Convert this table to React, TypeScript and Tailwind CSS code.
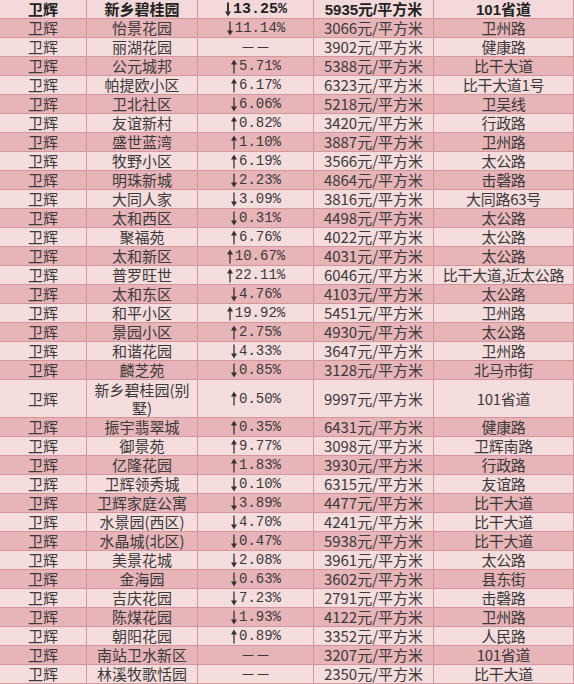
type Row = [string, string, number | null, string, string]

// [name, dir, change, price, road]
const rows: Row[] = [
  ["怡景花园", "down", 11.14, "3066", "卫州路"],
  ["丽湖花园", "", null, "3902", "健康路"],
  ["公元城邦", "up", 5.71, "5388", "比干大道"],
  ["帕提欧小区", "up", 6.17, "6323", "比干大道1号"],
  ["卫北社区", "down", 6.06, "5218", "卫吴线"],
  ["友谊新村", "up", 0.82, "3420", "行政路"],
  ["盛世蓝湾", "up", 1.1, "3887", "卫州路"],
  ["牧野小区", "up", 6.19, "3566", "太公路"],
  ["明珠新城", "down", 2.23, "4864", "击磬路"],
  ["大同人家", "down", 3.09, "3816", "大同路63号"],
  ["太和西区", "down", 0.31, "4498", "太公路"],
  ["聚福苑", "up", 6.76, "4022", "太公路"],
  ["太和新区", "up", 10.67, "4031", "太公路"],
  ["普罗旺世", "up", 22.11, "6046", "比干大道,近太公路"],
  ["太和东区", "down", 4.76, "4103", "太公路"],
  ["和平小区", "up", 19.92, "5451", "卫州路"],
  ["景园小区", "up", 2.75, "4930", "太公路"],
  ["和谐花园", "down", 4.33, "3647", "卫州路"],
  ["麟芝苑", "down", 0.85, "3128", "北马市街"],
  ["新乡碧桂园(别\n墅)", "up", 0.5, "9997", "101省道"],
  ["振宇翡翠城", "up", 0.35, "6431", "健康路"],
  ["御景苑", "up", 9.77, "3098", "卫辉南路"],
  ["亿隆花园", "up", 1.83, "3930", "行政路"],
  ["卫辉领秀城", "down", 0.1, "6315", "友谊路"],
  ["卫辉家庭公寓", "down", 3.89, "4477", "比干大道"],
  ["水景园(西区)", "down", 4.7, "4241", "比干大道"],
  ["水晶城(北区)", "down", 0.47, "5938", "比干大道"],
  ["美景花城", "down", 2.08, "3961", "太公路"],
  ["金海园", "down", 0.63, "3602", "县东街"],
  ["吉庆花园", "down", 7.23, "2791", "击磬路"],
  ["陈煤花园", "down", 1.93, "4122", "卫州路"],
  ["朝阳花园", "up", 0.89, "3352", "人民路"],
  ["南站卫水新区", "", null, "3207", "101省道"],
  ["林溪牧歌恬园", "", null, "2350", "比干大道"],
]

const cjk = "font-['Noto_Sans_CJK_SC','Liberation_Sans',sans-serif]"
const headFont = "font-['Liberation_Sans','Noto_Sans_CJK_SC',sans-serif]"
const mono = "font-['Liberation_Mono','Noto_Sans_CJK_SC',monospace]"

function Cell({ bg, tall, head, className = "", children }: {
  bg: string
  tall?: boolean
  head?: boolean
  className?: string
  children: React.ReactNode
}) {
  const shape = head
    ? `${headFont} h-[18px] pt-[1px] items-start leading-[17px] font-bold text-[#222]`
    : `${tall ? "h-[37px]" : "h-[18px]"} items-center leading-[18px] text-[#3a3a3a]`
  return (
    <div className={`${bg} ${shape} flex justify-center text-center whitespace-pre-line ${className}`}>
      {children}
    </div>
  )
}

function Arrow({ up, bold }: { up: boolean; bold?: boolean }) {
  return (
    <svg width="8" height="15" viewBox="0 0 8 15" className={`mr-[1px] ${up ? "" : "rotate-180"}`}>
      <line x1="4" y1="4" x2="4" y2="14.5" stroke="#333" strokeWidth={bold ? 2 : 1.3} />
      <path d="M4 0.5 L7 5.5 L1 5.5 Z" fill="#333" />
    </svg>
  )
}

function Change({ dir, value, bold }: { dir: string; value: number | null; bold?: boolean }) {
  if (value === null) return <span className={`${cjk} text-[15px]`}>－－</span>
  return (
    <span className="flex items-center">
      <Arrow up={dir === "up"} bold={bold} />
      <span className={`${mono} ${bold ? "text-[15px] font-bold text-[#222] leading-[17px]" : "text-[14px]"}`}>
        {value.toFixed(2)}%
      </span>
    </span>
  )
}

export default function App() {
  return (
    <div className={`${cjk} w-[574px] h-[684px] bg-[#d4959b] pr-px pb-px text-[15px]`}>
      <div className="grid grid-cols-[86px_110px_115px_119px_139px] gap-px">
        <Cell bg="bg-[#f4d9da]" head>卫辉</Cell>
        <Cell bg="bg-[#f4d9da]" head>新乡碧桂园</Cell>
        <Cell bg="bg-[#f4d9da]" head>
          <Change dir="down" value={13.25} bold />
        </Cell>
        <Cell bg="bg-[#f4d9da]" head>5935元/平方米</Cell>
        <Cell bg="bg-[#f4d9da]" head>101省道</Cell>

        {rows.map(([name, dir, value, price, road], i) => {
          const bg = i % 2 === 0 ? "bg-[#e7b4b7]" : "bg-[#f5dcdd]"
          const tall = name.includes("\n")
          return [
            <Cell key={`a${i}`} bg={bg} tall={tall}>卫辉</Cell>,
            <Cell key={`b${i}`} bg={bg} tall={tall}>{name}</Cell>,
            <Cell key={`c${i}`} bg={bg} tall={tall}>
              <Change dir={dir} value={value} />
            </Cell>,
            <Cell key={`d${i}`} bg={bg} tall={tall}>{price}元/平方米</Cell>,
            <Cell key={`e${i}`} bg={bg} tall={tall} className="tracking-[-0.3px]">{road}</Cell>,
          ]
        })}
      </div>
    </div>
  )
}
